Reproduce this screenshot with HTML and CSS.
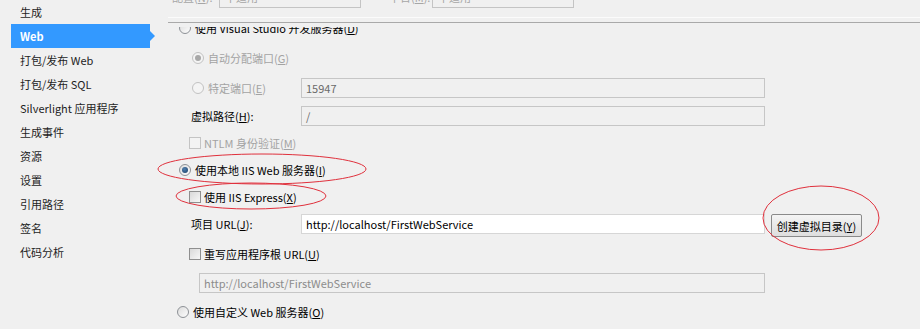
FILE: index.html
```html
<!DOCTYPE html>
<html lang="zh-CN">
<head>
<meta charset="utf-8">
<title>Web 属性</title>
<link rel="stylesheet" href="styles.css">
</head>
<body>
<div class="window">
  <nav class="sidebar">
    <div class="nav-item">生成</div>
    <div class="nav-item active">Web</div>
    <div class="nav-item">打包/发布 Web</div>
    <div class="nav-item">打包/发布 SQL</div>
    <div class="nav-item">Silverlight 应用程序</div>
    <div class="nav-item">生成事件</div>
    <div class="nav-item">资源</div>
    <div class="nav-item">设置</div>
    <div class="nav-item">引用路径</div>
    <div class="nav-item">签名</div>
    <div class="nav-item">代码分析</div>
  </nav>
  <main class="panel">
    <div class="config-bar">
      <div class="config-row">
        <span class="cfg-label">配置(<u>N</u>):</span>
        <div class="combo">不适用</div>
        <span class="cfg-label second">平台(<u>M</u>):</span>
        <div class="combo">不适用</div>
      </div>
    </div>
    <div class="divider"></div>
    <div class="scroll">
      <div class="rows">
        <div class="row h30 lvl0">
          <span class="radio"></span><span class="txt">使用 Visual Studio 开发服务器(<u>D</u>)</span>
        </div>
        <div class="row h30 lvl2 disabled">
          <span class="radio checked"></span><span class="txt">自动分配端口(<u>G</u>)</span>
        </div>
        <div class="row h30 field lvl2 disabled">
          <span class="lead"><span class="radio"></span><span class="txt">特定端口(<u>E</u>)</span></span>
          <div class="textbox dim">15947</div>
        </div>
        <div class="row h26 field lvl1">
          <span class="lead"><span class="txt">虚拟路径(<u>H</u>):</span></span>
          <div class="textbox dim">/</div>
        </div>
        <div class="row h28 lvl1b disabled">
          <span class="check"></span><span class="txt">NTLM 身份验证(<u>M</u>)</span>
        </div>
        <div class="row h26 lvl0">
          <span class="radio checked"></span><span class="txt">使用本地 IIS Web 服务器(<u>I</u>)</span>
        </div>
        <div class="row h28 lvl1b">
          <span class="check"></span><span class="txt">使用 IIS Express(<u>X</u>)</span>
        </div>
        <div class="row h28 field top lvl1">
          <span class="lead"><span class="txt">项目 URL(<u>J</u>):</span></span>
          <div class="textbox live">http://localhost/FirstWebService</div>
          <button class="btn" type="button">创建虚拟目录(<u>Y</u>)</button>
        </div>
        <div class="row h30 lvl1b">
          <span class="check"></span><span class="txt">重写应用程序根 URL(<u>U</u>)</span>
        </div>
        <div class="row h28 lvl3">
          <div class="textbox wide faded">http://localhost/FirstWebService</div>
        </div>
        <div class="row h30 lvl0m">
          <span class="radio"></span><span class="txt">使用自定义 Web 服务器(<u>O</u>)</span>
        </div>
        <div class="row h30 field lvl1">
          <span class="lead"></span>
          <div class="textbox dim"></div>
        </div>
      </div>
    </div>
  </main>
  <svg class="annotations" width="920" height="329" viewBox="0 0 920 329">
    <ellipse cx="262" cy="169" rx="104" ry="15"/>
    <ellipse cx="251" cy="196" rx="75" ry="13"/>
    <ellipse cx="821" cy="218" rx="58" ry="32"/>
  </svg>
</div>
</body>
</html>
```
FILE: styles.css
```css
html, body {
  margin: 0;
  padding: 0;
}
body {
  width: 920px;
  height: 329px;
  overflow: hidden;
  background: #f0f0f0;
  font-family: "Noto Sans CJK SC", "Noto Sans", sans-serif;
  font-size: 11px;
  color: #000;
}
u { text-decoration: underline; text-underline-offset: 1px; }

.window {
  position: relative;
  display: flex;
  width: 920px;
  height: 329px;
}

/* sidebar */
.sidebar {
  width: 168px;
  flex: none;
  display: flex;
  flex-direction: column;
}
.nav-item {
  position: relative;
  height: 24px;
  line-height: 24px;
  margin: 0 18px 0 11px;
  padding-left: 9px;
  color: #1e1e1e;
  white-space: nowrap;
}
.nav-item.active {
  background: #3399ff;
  color: #fff;
  font-weight: bold;
}
.nav-item.active::after {
  content: "";
  position: absolute;
  right: -5px;
  top: 7px;
  border-top: 5px solid transparent;
  border-bottom: 5px solid transparent;
  border-left: 5px solid #3399ff;
}

/* main panel */
.panel {
  flex: 1;
  display: flex;
  flex-direction: column;
  min-width: 0;
}
.config-bar {
  height: 17px;
  overflow: hidden;
  border-bottom: 1px solid #fbfbfb;
}
.config-row {
  display: flex;
  align-items: center;
  height: 22px;
  margin-top: -14px;
  color: #a6a6a6;
}
.cfg-label {
  width: 47px;
  padding-left: 4px;
  white-space: nowrap;
}
.cfg-label.second {
  width: 43px;
  margin-left: 24px;
}
.combo {
  width: 142px;
  height: 22px;
  box-sizing: border-box;
  border: 1px solid #c4c4c4;
  padding-left: 5px;
  line-height: 20px;
}
.divider {
  margin-top: 4px;
  height: 1px;
  background: #a9a9a9;
}
.scroll {
  flex: 1;
  overflow: hidden;
  margin-top: 4px;
}
.rows {
  margin-top: -14px;
  display: flex;
  flex-direction: column;
}
.row {
  display: flex;
  align-items: center;
  white-space: nowrap;
}
.row.top { align-items: flex-start; padding-top: 3px; box-sizing: border-box; }
.h26 { height: 26px; }
.h28 { height: 28px; }
.h30 { height: 30px; }

.lvl0 { padding-left: 11px; }
.lvl0m { padding-left: 9px; }
.lvl1 { padding-left: 23px; }
.lvl1b { padding-left: 21px; }
.lvl2 { padding-left: 24px; }
.lvl3 { padding-left: 31px; }

.field .lead {
  display: flex;
  align-items: center;
  width: calc(133px - var(--pad, 0px));
  flex: none;
}
.lvl1.field { --pad: 23px; }
.lvl2.field { --pad: 24px; }
.row.top .lead { height: 20px; }

.txt { line-height: 16px; }
.disabled .txt { color: #a3a3a3; }

/* radio + checkbox */
.radio {
  position: relative;
  width: 12px;
  height: 12px;
  flex: none;
  box-sizing: border-box;
  border-radius: 50%;
  border: 1px solid #8d9196;
  background: linear-gradient(135deg, #dcdcdc, #fdfdfd);
  margin-right: 4px;
}
.radio.checked::after {
  content: "";
  position: absolute;
  left: 2px;
  top: 2px;
  width: 6px;
  height: 6px;
  border-radius: 50%;
  background: radial-gradient(circle at 40% 35%, #4f7fae, #1c3f66);
}
.disabled .radio {
  border-color: #c2c2c2;
  background: #f4f4f4;
}
.disabled .radio.checked::after {
  background: #a8a8a8;
}
.check {
  width: 12px;
  height: 12px;
  flex: none;
  box-sizing: border-box;
  border: 1px solid #8f8f8f;
  background: linear-gradient(135deg, #d9d9d9, #f7f7f7);
  margin-right: 3px;
}
.disabled .check {
  border-color: #c4c4c4;
  background: #f3f3f3;
}

/* text boxes */
.textbox {
  width: 464px;
  height: 20px;
  box-sizing: border-box;
  border: 1px solid #c6c6c6;
  padding-left: 4px;
  line-height: 18px;
  flex: none;
}
.textbox.dim { color: #6a6a6a; }
.textbox.live {
  background: #fff;
  border-color: #d6d6d6;
  color: #000;
}
.textbox.wide { width: 566px; }
.textbox.faded { color: #8c8c8c; }

.btn {
  margin-left: 6px;
  width: 91px;
  height: 23px;
  box-sizing: border-box;
  border: 1px solid #8a8a8a;
  border-radius: 2px;
  background: linear-gradient(#f4f4f4, #dedede);
  font: inherit;
  color: #000;
  padding: 0;
}

/* annotation ellipses */
.annotations {
  position: absolute;
  left: 0;
  top: 0;
  pointer-events: none;
}
.annotations ellipse {
  fill: none;
  stroke: #e0303c;
  stroke-width: 1;
}
```
